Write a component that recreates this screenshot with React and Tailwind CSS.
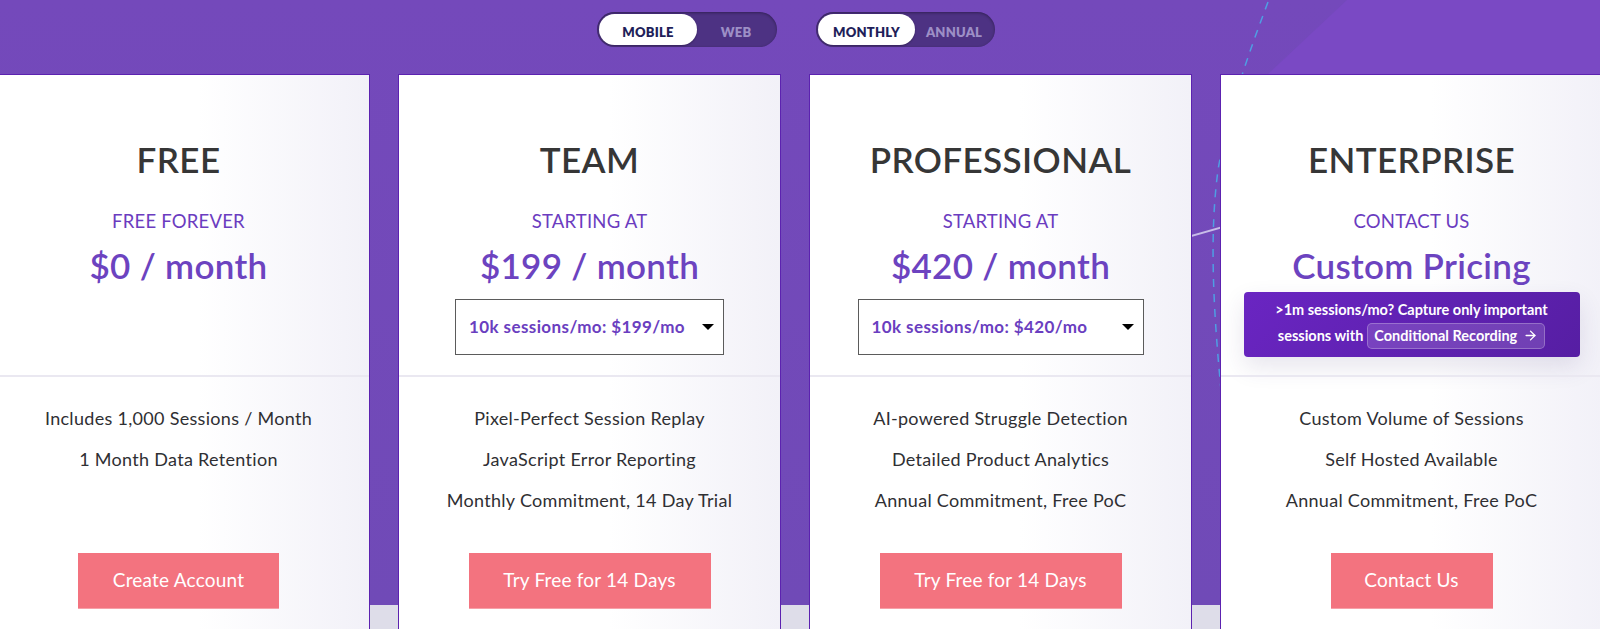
import { ArrowRight } from 'lucide-react'

const PLANS = [
  {
    name: 'FREE',
    label: 'FREE FOREVER',
    price: '$0 / month',
    features: ['Includes 1,000 Sessions / Month', '1 Month Data Retention'],
    cta: 'Create Account',
    ctaWidth: 'w-[201px]',
  },
  {
    name: 'TEAM',
    label: 'STARTING AT',
    price: '$199 / month',
    select: '10k sessions/mo: $199/mo',
    selectWidth: 'w-[269px]',
    features: ['Pixel-Perfect Session Replay', 'JavaScript Error Reporting', 'Monthly Commitment, 14 Day Trial'],
    cta: 'Try Free for 14 Days',
    ctaWidth: 'w-[242px]',
  },
  {
    name: 'PROFESSIONAL',
    label: 'STARTING AT',
    price: '$420 / month',
    select: '10k sessions/mo: $420/mo',
    selectWidth: 'w-[286px]',
    features: ['AI-powered Struggle Detection', 'Detailed Product Analytics', 'Annual Commitment, Free PoC'],
    cta: 'Try Free for 14 Days',
    ctaWidth: 'w-[242px]',
  },
  {
    name: 'ENTERPRISE',
    label: 'CONTACT US',
    price: 'Custom Pricing',
    callout: true,
    features: ['Custom Volume of Sessions', 'Self Hosted Available', 'Annual Commitment, Free PoC'],
    cta: 'Contact Us',
    ctaWidth: 'w-[162px]',
  },
]

function Toggle({ on, off, width, onWidth }) {
  return (
    <div
      className={`${width} flex items-center h-[35px] p-[2px] rounded-full bg-[#4d3283] shadow-[inset_0_1px_3px_rgba(0,0,0,0.35)] text-[13px] font-extrabold tracking-[0.2px]`}
    >
      <div
        className={`${onWidth} h-full pt-[7px] flex items-center justify-center rounded-full bg-white text-[#1f1f5a] shadow-[0_1px_2px_rgba(0,0,0,0.3)]`}
      >
        {on}
      </div>
      <div className="flex-1 h-full pt-[7px] flex items-center justify-center text-[#9d8fc6]">{off}</div>
    </div>
  )
}

function Backdrop() {
  return (
    <svg className="absolute inset-0 pointer-events-none" width="1600" height="629" viewBox="0 0 1600 629">
      <polygon points="1347,0 1600,0 1600,74 1268,74" fill="#7a49c4" />
      <line x1="1100" y1="262" x2="1300" y2="205" stroke="#c8bde8" strokeWidth="2" />
      <path
        d="M1268 2 C 1250 50, 1228 110, 1218 170 C 1210 230, 1212 300, 1222 400"
        fill="none"
        stroke="#4f9ee3"
        strokeWidth="1.5"
        strokeDasharray="8 7"
      />
    </svg>
  )
}

function Card({ plan }) {
  return (
    <div className="w-[383px] shrink-0 h-[560px] border-t border-x border-[#5c22b0] bg-[linear-gradient(to_right,#ffffff_55%,#f2f1f8_100%)] flex flex-col">
      <div className="h-[300px] flex flex-col items-center pt-[64px]">
        <h2 className="text-[35px] leading-[40px] font-semibold text-[#363636] tracking-[0.4px]">{plan.name}</h2>
        <div className="mt-[30px] text-[18.5px] leading-[24px] text-[#6b3cc0] tracking-[0.2px]">{plan.label}</div>
        <div className="mt-[12px] text-[35px] leading-[40px] font-semibold text-[#6c43c0] tracking-[0.3px]">
          {plan.price}
        </div>
        {plan.select && (
          <div
            className={`${plan.selectWidth} mt-[14px] h-[56px] border border-[#5b5b5b] bg-white flex items-center justify-between pl-[13px] pr-[9px]`}
          >
            <span className="text-[17px] font-bold text-[#6a3ec0] tracking-[0.4px]">{plan.select}</span>
            <span className="w-0 h-0 border-l-[6px] border-r-[6px] border-t-[6px] border-l-transparent border-r-transparent border-t-black" />
          </div>
        )}
        {plan.callout && (
          <div className="mt-[7px] w-[336px] h-[65px] rounded-[4px] bg-[linear-gradient(135deg,#6a25c2,#561ea3)] shadow-[0_10px_24px_rgba(60,40,110,0.12)] flex flex-col items-center justify-center text-white text-[14.5px] font-bold leading-[18px]">
            <div>&gt;1m sessions/mo? Capture only important</div>
            <div className="mt-[4px] flex items-center gap-[4px]">
              <span>sessions with</span>
              <span className="flex items-center gap-[6px] h-[26px] px-[6px] rounded-[5px] bg-white/15 border border-white/25">
                Conditional Recording
                <ArrowRight size={15} strokeWidth={2.2} />
              </span>
            </div>
          </div>
        )}
      </div>
      <div className="border-t-2 border-[#eae8f1] h-[178px] pt-[29px] flex flex-col items-center gap-[17px] text-[18px] leading-[24px] text-[#2f2f33] tracking-[0.3px]">
        {plan.features.map((f) => (
          <div key={f}>{f}</div>
        ))}
      </div>
      <div className="flex justify-center">
        <button
          className={`${plan.ctaWidth} h-[56px] bg-[#f3737f] text-white text-[19px] tracking-[0.2px] border-b border-[#f7a0a8]`}
        >
          {plan.cta}
        </button>
      </div>
    </div>
  )
}

export default function App() {
  return (
    <div
      className="relative w-[1600px] h-[629px] overflow-hidden bg-[linear-gradient(to_bottom,#7449bb_0px,#704ab7_605px,#dedde9_605px)]"
      style={{ fontFamily: 'Lato, "Open Sans", sans-serif' }}
    >
      <Backdrop />
      <div className="relative flex flex-col">
        <div className="pt-[12px] flex justify-center gap-[39px] pr-[8px]">
          <Toggle on="MOBILE" off="WEB" width="w-[180px]" onWidth="w-[98px]" />
          <Toggle on="MONTHLY" off="ANNUAL" width="w-[179px]" onWidth="w-[97px]" />
        </div>
        <div className="mt-[27px] ml-[-13px] flex gap-[28px]">
          {PLANS.map((p) => (
            <Card key={p.name} plan={p} />
          ))}
        </div>
      </div>
    </div>
  )
}
